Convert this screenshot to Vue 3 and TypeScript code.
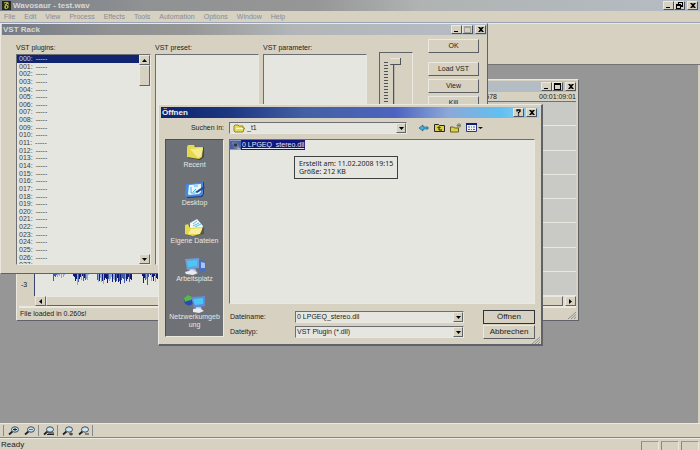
<script setup lang="ts">
import { ref } from 'vue'

const menus = ['File', 'Edit', 'View', 'Process', 'Effects', 'Tools', 'Automation', 'Options', 'Window', 'Help']
const slots = Array.from({ length: 28 }, (_, i) => String(i).padStart(3, '0') + ':')
const selectedSlot = ref(0)
const paramValue = ref(0)
const fileName = ref('0 LPGEQ_stereo.dll')
const fileType = ref('VST Plugin (*.dll)')
const folder = ref('_t1')
const rackActions = ['Load VST', 'View', 'Kill']
const places = [
  { id: 'recent', label: 'Recent' },
  { id: 'desktop', label: 'Desktop' },
  { id: 'docs', label: 'Eigene Dateien' },
  { id: 'computer', label: 'Arbeitsplatz' },
  { id: 'network', label: 'Netzwerkumgebung' },
]
const zoomTools = [
  { id: 'in', label: 'Zoom in', group: 0 },
  { id: 'out', label: 'Zoom out', group: 0 },
  { id: 'fit', label: 'Zoom to selection', group: 1 },
  { id: 'vin', label: 'Vertical zoom in', group: 2 },
  { id: 'vout', label: 'Vertical zoom out', group: 2 },
]

interface Peak { x: number; h: number; tone: string }
const tones = ['#101878', '#3c5ca8', '#8ca8d8']
function burst(from: number, to: number, heights: number[]): Peak[] {
  const out: Peak[] = []
  for (let x = from; x < to; x++) {
    const h = heights[(x - from) % heights.length] ?? 0
    if (h > 0) out.push({ x, h, tone: tones[(x * 5 + h) % 3] ?? '#101878' })
  }
  return out
}
const peaks: Peak[] = [
  ...burst(18, 30, [7, 2, 3, 1, 3, 1, 2, 0, 4, 0, 3, 1]),
  ...burst(38, 54, [2, 3, 7, 5, 11, 8, 5, 3, 6, 2, 7, 4, 6, 5, 6, 1]),
  ...burst(62, 97, [6, 8, 7, 4, 8, 7, 10, 6, 4, 5, 9, 5, 7, 5, 3, 8, 5]),
  ...burst(107, 123, [2, 9, 4, 6, 5, 11, 3, 0, 1, 7, 3, 7, 2, 8, 4, 5]),
]
</script>

<template>
  <div class="app">
    <header class="titlebar main-title">
      <svg class="app-icon" viewBox="0 0 9 9" aria-hidden="true">
        <rect width="9" height="9" fill="#24281c" />
        <path d="M2 1h4l1 2-1 1 1 2-2 2H3L2 6l1-2z" fill="#a8a848" />
        <path d="M3 2h1v1H3zM5 3h1v1H5zM4 5h1v2H4z" fill="#24281c" />
      </svg>
      <h1 class="caption">Wavosaur - test.wav</h1>
      <div class="win-buttons">
        <button class="wb" aria-label="Minimize"><svg viewBox="0 0 9 7"><path d="M2 5h4v1H2z" /></svg></button>
        <button class="wb" aria-label="Restore"><svg viewBox="0 0 9 7"><path d="M3 0h5v5H6v2H1V2h2zM4 2h2v1h1V1H4zM2 4v2h3V4z" fill-rule="evenodd" /></svg></button>
        <button class="wb apart" aria-label="Close"><svg viewBox="0 0 9 7"><path d="M2 1h2l1 1 1-1h2L6 3.500l2 2.500H6L5 5 4 6H2l2-2.500z" /></svg></button>
      </div>
    </header>
    <nav class="menubar">
      <button v-for="m in menus" :key="m" class="menu">{{ m }}</button>
    </nav>
    <div class="top-toolbar"></div>
    <main class="mdi"></main>
    <div class="zoom-toolbar">
      <div v-for="g in 3" :key="g" class="tool-group">
        <button v-for="t in zoomTools.filter(z => z.group === g - 1)" :key="t.id" class="tool" :aria-label="t.label">
          <svg viewBox="0 0 12 10" aria-hidden="true">
            <path d="M1 8.500L4.500 5.500" stroke="#202028" stroke-width="1.800" />
            <ellipse cx="7" cy="3.500" rx="3.500" ry="2.700" fill="#c8e4f0" stroke="#404858" />
            <path v-if="t.id === 'in'" d="M5 3.500h4M7 2v3" stroke="#202028" />
            <path v-if="t.id === 'out'" d="M5 3.500h4" stroke="#606878" />
            <path v-if="t.id === 'fit'" d="M4 8.500h7M5 7h6" stroke="#202028" />
            <path v-if="t.id === 'vin'" d="M7 8h4M9 6.500v3" stroke="#202028" />
            <path v-if="t.id === 'vout'" d="M7 8h4" stroke="#303038" />
          </svg>
        </button>
      </div>
    </div>
    <footer class="statusbar">
      <span class="status-text">Ready</span>
      <span class="status-cell"></span><span class="status-cell"></span><span class="status-cell"></span>
    </footer>

    <section class="window doc" aria-label="test.wav">
      <div class="titlebar doc-title">
        <div class="win-buttons">
          <button class="wb" aria-label="Minimize"><svg viewBox="0 0 9 7"><path d="M2 5h4v1H2z" /></svg></button>
          <button class="wb" aria-label="Maximize"><svg viewBox="0 0 9 7"><path d="M1 0h7v7H1zM2 2v4h5V2z" fill-rule="evenodd" /></svg></button>
          <button class="wb apart" aria-label="Close"><svg viewBox="0 0 9 7"><path d="M2 1h2l1 1 1-1h2L6 3.500l2 2.500H6L5 5 4 6H2l2-2.500z" /></svg></button>
        </div>
      </div>
      <div class="ruler"><span>578</span><span>00:01:09:01</span></div>
      <div class="doc-body">
        <div class="db-scale"><span>-3</span></div>
        <div class="wave">
          <svg class="wave-svg" viewBox="0 0 140 22" aria-hidden="true">
            <rect width="140" height="22" fill="#e6e6e1" />
            <rect v-for="p in peaks" :key="p.x" :x="p.x" y="0" width="1" :height="p.h" :fill="p.tone" />
          </svg>
          <div class="grid-lines"><i v-for="n in 8" :key="n"></i></div>
        </div>
      </div>
      <div class="hscroll">
        <button class="sb" aria-label="Scroll left"><svg viewBox="0 0 9 7"><path d="M6 1v5L3 3.500z" /></svg></button>
        <div class="hthumb"></div>
        <button class="sb" aria-label="Scroll right"><svg viewBox="0 0 9 7"><path d="M3 1v5l3-2.500z" /></svg></button>
      </div>
      <div class="doc-status">
        <span>File loaded in 0.260s!</span>
        <svg class="grip" viewBox="0 0 9 8"><path d="M1 8L9 1M4 8l5-4.500M7 8l2-2" stroke="#8c8c8c" /></svg>
      </div>
    </section>

    <section class="window rack" aria-label="VST Rack">
      <div class="titlebar rack-title">
        <h2 class="caption">VST Rack</h2>
        <div class="win-buttons">
          <button class="wb" aria-label="Minimize"><svg viewBox="0 0 9 7"><path d="M2 5h4v1H2z" /></svg></button>
          <button class="wb" aria-label="Maximize" disabled><svg viewBox="0 0 9 7"><path d="M1 0h7v7H1zM2 2v4h5V2z" fill="#a4a49c" fill-rule="evenodd" /></svg></button>
          <button class="wb apart" aria-label="Close"><svg viewBox="0 0 9 7"><path d="M2 1h2l1 1 1-1h2L6 3.500l2 2.500H6L5 5 4 6H2l2-2.500z" /></svg></button>
        </div>
      </div>
      <div class="rack-body">
        <div class="col plugins">
          <span id="lbl-plugins" class="col-label">VST plugins:</span>
          <div class="listbox">
            <ul class="slots" role="listbox" aria-labelledby="lbl-plugins">
              <li v-for="(s, i) in slots" :key="s" role="option" :aria-selected="i === selectedSlot"
                :class="{ on: i === selectedSlot }" @click="selectedSlot = i"><span>{{ s }}</span><span>-----</span></li>
            </ul>
            <div class="vscroll">
              <button class="sb" aria-label="Scroll up"><svg viewBox="0 0 9 7"><path d="M2 5h5L4.500 2z" /></svg></button>
              <div class="vthumb"></div>
              <button class="sb bottom" aria-label="Scroll down"><svg viewBox="0 0 9 7"><path d="M2 2h5L4.500 5z" /></svg></button>
            </div>
          </div>
        </div>
        <div class="col">
          <span class="col-label">VST preset:</span>
          <div class="listbox"></div>
        </div>
        <div class="col">
          <span class="col-label">VST parameter:</span>
          <div class="listbox"></div>
        </div>
        <div class="fader">
          <div class="ticks"></div>
          <input v-model="paramValue" type="range" min="0" max="100" aria-label="Parameter value" />
        </div>
        <div class="rack-actions">
          <button class="btn ok">OK</button>
          <button v-for="a in rackActions" :key="a" class="btn">{{ a }}</button>
        </div>
      </div>
    </section>

    <section class="window dialog" role="dialog" aria-label="Öffnen">
      <div class="titlebar dialog-title">
        <h2 class="caption">Öffnen</h2>
        <div class="win-buttons">
          <button class="wb" aria-label="Help"><svg viewBox="0 0 9 7"><path d="M3 2.500V1h3v1.500L4.500 3.500v1.200M4.500 5.500v1.200" fill="none" stroke="#000" stroke-width="1.300" /></svg></button>
          <button class="wb apart" aria-label="Close"><svg viewBox="0 0 9 7"><path d="M2 1h2l1 1 1-1h2L6 3.500l2 2.500H6L5 5 4 6H2l2-2.500z" /></svg></button>
        </div>
      </div>
      <div class="look-in">
        <label for="folder">Suchen in:</label>
        <div class="combo with-icon">
          <select id="folder" v-model="folder"><option>_t1</option></select>
          <svg class="combo-icon" viewBox="0 0 12 9" aria-hidden="true">
            <path d="M1 7V2l1-1h3l1 1h4v2h1.500L10 8H2z" fill="#e8dc50" stroke="#8c8428" />
            <path d="M3 4.500h7" stroke="#fcfcc0" />
          </svg>
          <span class="drop"><svg viewBox="0 0 9 7"><path d="M2 2h5L4.500 5z" /></svg></span>
        </div>
        <div class="nav-tools">
          <button class="nav" aria-label="Back"><svg viewBox="0 0 11 10"><path d="M1 5l4-3v2h5v2H5v2z" fill="#40b8e8" stroke="#285078" stroke-width=".7" /></svg></button>
          <button class="nav" aria-label="Up one level"><svg viewBox="0 0 11 10"><path d="M.5 8.500v-7h4l1 1h5v6z" fill="#dcd048" stroke="#28281c" /><path d="M5 4v3h3M3.500 5L5 3.500 6.500 5" fill="none" stroke="#181818" /></svg></button>
          <button class="nav" aria-label="New folder"><svg viewBox="0 0 11 10"><path d="M.5 9V4h3l1 1h4v4z" fill="#dcd048" stroke="#68601c" /><path d="M9 0v5M6.500 2.500h4.500M7 1l4 3M11 1L7 4" stroke="#6c6c48" stroke-width=".7" /></svg></button>
          <button class="nav wide" aria-label="View menu"><svg viewBox="0 0 17 10"><path d="M.5.5h10v8H.5z" fill="#f0f0f0" stroke="#283880" /><path d="M0 1h11" stroke="#102070" stroke-width="2" /><path d="M2 4h2M5 4h1M7 4h2M2 6.500h2M5 6.500h1M7 6.500h2" stroke="#4868c0" /><path d="M12 4h5l-2.500 2z" fill="#101010" /></svg></button>
        </div>
      </div>
      <div class="dialog-body">
        <div class="places">
          <button v-for="p in places" :key="p.id" class="place">
            <svg viewBox="0 0 24 20" aria-hidden="true">
              <g v-if="p.id === 'recent'">
                <path d="M5 17V6l2-1h5l2 1h7v10l-4 3z" fill="#484838" />
                <path d="M4 16V6l1-2h6l1 2h8l-1 10-3 2z" fill="#e4d84c" />
                <path d="M7 8l13-1-2 8-3 2z" fill="#f4eb90" />
              </g>
              <g v-if="p.id === 'desktop'">
                <path d="M4 19l1-14 16-2v12l-2 3-13 1z" fill="#203c78" />
                <path d="M2 17L3 5l17-2v12l-2 2-13 1z" fill="#4888e0" />
                <path d="M5 15l1-9 12-1v8l-2 2-10 1z" fill="#e8f4f8" />
                <path d="M8 8v6h4M11 7h4M10 13l3-3" stroke="#38b8e8" fill="none" />
                <path d="M12 13l9-6 1 2-8 5z" fill="#284c90" />
              </g>
              <g v-if="p.id === 'docs'">
                <path d="M4 18v-8l3-2 7-4 7 7v6l-9 2z" fill="#585838" />
                <path d="M7 12V6l7-4 6 7-2 6z" fill="#f0f8f8" />
                <path d="M10 7l4-3M10 9l6-3M12 10l6-3" stroke="#50c0e8" />
                <path d="M2 17V8l3-1 2 4 12-1-2 7-7 2z" fill="#e4d84c" />
                <path d="M5 17l3-5 11-1-2 6z" fill="#f8eea0" />
              </g>
              <g v-if="p.id === 'computer'" transform="translate(0 2)">
                <path d="M15 3l8 1v10l-6 2z" fill="#4870c0" />
                <path d="M18 5l4 1v5h-4z" fill="#a8c4ec" />
                <path d="M2 2l14-1v10L4 13z" fill="#7898d8" />
                <path d="M4 4l10-1v6L5 10z" fill="#48c8f4" />
                <path d="M7 12h5l2 3-3 2H5z" fill="#b0c4e8" />
                <path d="M2 15l7-2 6 3-5 2-7-1z" fill="#e8ecf0" />
              </g>
              <g v-if="p.id === 'network'" transform="translate(0 1)">
                <circle cx="6" cy="6.500" r="5" fill="#284ca8" />
                <path d="M1 4l4-3 5 2-2 3-4 1-2 1z" fill="#58b848" />
                <path d="M8 3l14-1v10l-11 2z" fill="#6888d8" />
                <path d="M10 5l10-1v6l-8 1z" fill="#48c8f4" />
                <path d="M13 13h5l1 3h-6z" fill="#b0c4e8" />
                <path d="M10 15l6-1 5 3-5 2-6-1z" fill="#e8ecf0" />
              </g>
            </svg>
            <span>{{ p.label }}</span>
          </button>
        </div>
        <div class="files-and-fields">
          <div class="files">
            <button class="file">
              <svg viewBox="0 0 12 10" aria-hidden="true"><rect width="12" height="10" fill="#4860a8" /><path d="M2 2h5l3 4v3H5z" fill="#788098" /><circle cx="6" cy="5" r="2" fill="#303848" /><path d="M8 8h3v2H8z" fill="#a0b0d0" /></svg>
              <span>{{ fileName }}</span>
            </button>
            <div class="tooltip" role="tooltip">Erstellt am: 11.02.2008 19:15<br />Größe: 212 KB</div>
          </div>
          <form class="fields" @submit.prevent>
            <label for="fname">Dateiname:</label>
            <div class="combo">
              <input id="fname" v-model="fileName" type="text" />
              <span class="drop"><svg viewBox="0 0 9 7"><path d="M2 2h5L4.500 5z" /></svg></span>
            </div>
            <button class="btn default">Öffnen</button>
            <label for="ftype">Dateityp:</label>
            <div class="combo">
              <select id="ftype" v-model="fileType"><option>VST Plugin (*.dll)</option></select>
              <span class="drop"><svg viewBox="0 0 9 7"><path d="M2 2h5L4.500 5z" /></svg></span>
            </div>
            <button type="button" class="btn">Abbrechen</button>
          </form>
        </div>
      </div>
      <svg class="grip corner" viewBox="0 0 9 8"><path d="M1 8L9 1M4 8l5-4.500M7 8l2-2" stroke="#8c8c8c" /></svg>
    </section>
  </div>
</template>

<style>
body {
  background: #969696;
  overflow: hidden;
}
</style>

<style scoped>
.app {
  --face: #d6d1c0;
  --light: #ebe9df;
  --paper: #e6e6e1;
  position: relative;
  display: flex;
  flex-direction: column;
  height: 100vh;
  overflow: hidden;
  background: #969696;
  color: #1c1c1c;
  font: 7px/8px "Liberation Sans", Arial, sans-serif;
}
.app *, .app *::before { box-sizing: border-box; }
button, input, select {
  margin: 0;
  padding: 0;
  border: 0;
  border-radius: 0;
  background: none;
  color: inherit;
  font: inherit;
  outline: 0;
}
svg { display: block; }
ul { margin: 0; padding: 0; list-style: none; }

.titlebar {
  display: flex;
  align-items: center;
  flex: none;
  height: 11px;
  color: #d8d8d0;
}
.caption {
  flex: 1;
  margin: 0;
  font: bold 8px/10px "Liberation Sans", Arial, sans-serif;
}
.main-title {
  padding: 0 2px;
  gap: 2px;
  background: linear-gradient(90deg, #757b86, #8f9192 20%, #969696 45%, #b0b3b2 60%, #b5bcc4);
}
.app-icon { width: 9px; height: 9px; }
.win-buttons { display: flex; flex: none; }
.wb {
  display: grid;
  place-items: center;
  width: 11px;
  height: 9px;
  background: var(--face);
  border: 1px solid;
  border-color: var(--light) #50525a #50525a var(--light);
}
.wb svg, .sb svg, .drop svg { width: 9px; height: 7px; }
.apart { margin-left: 2px; }

.menubar {
  display: flex;
  flex: none;
  gap: 9px;
  height: 12px;
  padding: 0 4px;
  background: var(--face);
  color: #868b98;
  border-bottom: 1px solid #9aa4b4;
}
.top-toolbar {
  flex: none;
  height: 42px;
  background: var(--face);
  border-top: 1px solid var(--light);
  border-bottom: 1px solid #747474;
}
.mdi {
  flex: 1;
  border-right: 2px solid var(--face);
}
.zoom-toolbar {
  display: flex;
  flex: none;
  height: 15px;
  padding: 1px 3px;
  background: var(--face);
  border-top: 1px solid var(--light);
  border-bottom: 1px solid #84868c;
}
.tool-group {
  display: flex;
  gap: 4px;
  padding: 1px 2px 1px 4px;
  border-left: 1px solid #84888e;
}
.tool-group:last-child { border-right: 1px solid #84888e; }
.tool svg { width: 12px; height: 10px; }
.statusbar {
  display: flex;
  flex: none;
  gap: 2px;
  height: 12px;
  padding: 2px 1px 0;
  background: var(--face);
  border-top: 1px solid var(--light);
}
.status-text { flex: 1; font-size: 8px; }
.status-cell {
  width: 18px;
  height: 9px;
  border-top: 1px solid #8b98b0;
  border-left: 1px solid #84868c;
  border-right: 1px solid var(--light);
}

.window {
  position: absolute;
  display: flex;
  flex-direction: column;
  background: var(--face);
  border: 1px solid;
  border-color: var(--light) #60626a #60626a var(--light);
}
.doc {
  left: 16px;
  top: 79px;
  width: 563px;
  height: 242px;
  padding: 1px 2px;
}
.doc-title {
  justify-content: flex-end;
  background: linear-gradient(90deg, #7c8086, #b4bcc4 80%);
}
.ruler {
  display: flex;
  justify-content: flex-end;
  flex: none;
  gap: 42px;
  height: 10px;
  padding-top: 1px;
  overflow: hidden;
  white-space: nowrap;
  border-bottom: 1px solid #707070;
}
.doc-body {
  display: flex;
  flex: 1;
}
.db-scale {
  display: flex;
  align-items: flex-end;
  width: 16px;
  padding: 0 2px 7px;
  border-right: 1px solid #384470;
}
.wave {
  display: flex;
  align-items: flex-end;
  flex: 1;
  background: #c9cac6;
}
.wave-svg { width: 140px; height: 22px; }
.grid-lines {
  flex: 1;
  align-self: stretch;
  display: grid;
}
.grid-lines i { border-bottom: 1px solid var(--light); }
.hscroll {
  display: flex;
  flex: none;
  height: 10px;
  margin-left: 16px;
  background: #dfdcd0;
}
.hthumb {
  flex: 1;
  margin-right: 2px;
  background: var(--face);
  border: 1px solid;
  border-color: var(--light) #60626a #60626a var(--light);
}
.doc-status {
  display: flex;
  align-items: center;
  justify-content: space-between;
  flex: none;
  height: 13px;
  padding-left: 1px;
  border-top: 2px solid var(--light);
}
.grip { width: 9px; height: 8px; align-self: flex-end; }

.sb {
  display: grid;
  place-items: center;
  flex: none;
  width: 11px;
  height: 10px;
  background: var(--face);
  border: 1px solid;
  border-color: var(--light) #60626a #60626a var(--light);
}
.btn {
  height: 14px;
  background: var(--face);
  border: 1px solid;
  border-color: var(--light) #5c5e66 #5c5e66 var(--light);
  text-align: center;
}

.rack {
  left: 0;
  top: 23px;
  width: 488px;
  height: 251px;
}
.rack-title {
  margin-left: 1px;
  padding: 0 1px;
  background: linear-gradient(90deg, #757b86, #8f9192 22%, #969696 38%, #b2b6b8 60%, #b5bcc4);
}
.rack-body {
  display: flex;
  flex: 1;
  gap: 4px;
  min-height: 0;
  padding: 4px 8px 8px 15px;
}
.col {
  display: flex;
  flex-direction: column;
  width: 104px;
  padding-top: 5px;
}
.plugins { width: 135px; }
.col-label { height: 10px; }
.listbox {
  display: flex;
  flex: 1;
  min-height: 0;
  overflow: hidden;
  background: var(--paper);
  border: 1px solid;
  border-color: #6c6e74 var(--light) var(--light) #6c6e74;
}
.slots {
  flex: 1;
  display: grid;
  grid-auto-rows: 1fr;
  height: 214px;
}
.slots li {
  display: flex;
  gap: 3px;
  padding-left: 2px;
  min-height: 0;
  color: #3c3c40;
}
.slots .on { background: #102470; color: #d0d8ec; }
.vscroll {
  display: flex;
  flex-direction: column;
  width: 11px;
}
.vthumb {
  height: 21px;
  background: var(--face);
  border: 1px solid;
  border-color: var(--light) #60626a #60626a var(--light);
}
.bottom { margin-top: auto; }
.fader {
  display: flex;
  width: 34px;
  margin: 13px 0 0 8px;
  padding: 5px 4px 0;
  border: 1px solid;
  border-color: #60626a var(--light) var(--light) #60626a;
}
.ticks {
  width: 4px;
  margin-top: 4px;
  background: repeating-linear-gradient(#50525a 0 1px, transparent 1px 3px);
}
.fader input {
  appearance: none;
  writing-mode: vertical-lr;
  width: 13px;
  height: 100%;
  background: linear-gradient(90deg, transparent 5px, #50525a 5px 6px, #b4b4ac 6px 7px, transparent 7px);
}
.fader input::-webkit-slider-thumb {
  appearance: none;
  width: 13px;
  height: 7px;
  background: linear-gradient(var(--light) 1px, var(--face) 1px 6px, #50525a 6px);
  border-right: 1px solid #50525a;
  clip-path: polygon(0 50%, 20% 0, 100% 0, 100% 100%, 20% 100%);
}
.rack-actions {
  display: flex;
  flex-direction: column;
  gap: 3px;
  width: 51px;
  margin-left: auto;
}
.ok { margin-bottom: 6px; }

.dialog {
  left: 158px;
  top: 104px;
  width: 385px;
  height: 242px;
  padding: 2px;
  border-width: 1px 2px 2px 1px;
}
.dialog-title {
  padding: 0 2px 0 1px;
  background: linear-gradient(90deg, #0c246c, #1c3680 18%, #4460a4 38%, #4c64c0 62%, #8ca8d8 76%, #60c0f0 90%, #a0d0f0);
}
.dialog-title .caption { color: #f0f0f0; }
.look-in {
  display: flex;
  align-items: center;
  flex: none;
  height: 20px;
  padding: 0 3px;
}
.look-in label {
  width: 60px;
  text-align: right;
}
.combo {
  position: relative;
  display: flex;
  height: 12px;
  background: var(--paper);
  border: 1px solid;
  border-color: #6c6e74 var(--light) var(--light) #6c6e74;
}
.look-in .combo { width: 178px; margin-left: 5px; }
.combo select, .combo input {
  appearance: none;
  width: 100%;
  padding: 0 12px 0 1px;
  line-height: 10px;
}
.combo.with-icon select { padding-left: 17px; }
.combo-icon {
  position: absolute;
  left: 3px;
  top: 1px;
  width: 12px;
  height: 9px;
}
.drop {
  position: absolute;
  right: 0;
  top: 0;
  display: grid;
  place-items: center;
  width: 10px;
  height: 10px;
  background: var(--face);
  border: 1px solid;
  border-color: var(--light) #60626a #60626a var(--light);
  pointer-events: none;
}
.nav-tools { display: flex; gap: 5px; margin-left: 11px; }
.nav svg { width: 11px; height: 10px; }
.nav.wide svg { width: 17px; }
.dialog-body {
  display: flex;
  flex: 1;
  gap: 5px;
  min-height: 0;
  padding: 1px 4px 5px;
}
.places {
  display: flex;
  flex-direction: column;
  width: 59px;
  padding-top: 1px;
  background: #6e7276;
  border: 1px solid;
  border-color: #4c4e54 var(--light) var(--light) #4c4e54;
}
.place {
  display: flex;
  flex-direction: column;
  align-items: center;
  height: 38px;
  color: #e6e6e1;
}
.place svg { width: 24px; height: 20px; }
.place span {
  width: 54px;
  text-align: center;
  overflow-wrap: anywhere;
}
.files-and-fields {
  display: flex;
  flex: 1;
  flex-direction: column;
  min-width: 0;
}
.files {
  position: relative;
  flex: none;
  height: 165px;
  background: var(--paper);
  border: 1px solid;
  border-color: #6c6e74 var(--light) var(--light) #6c6e74;
}
.file {
  display: flex;
  align-items: center;
}
.file svg { width: 11px; height: 10px; }
.file span {
  padding: 0 1px;
  background: #101880;
  color: #e0e4f4;
  line-height: 10px;
  text-decoration: underline;
}
.tooltip {
  position: absolute;
  left: 64px;
  top: 16px;
  padding: 3px 4px 2px;
  background: var(--paper);
  border: 1px solid #404040;
  font: 7px/8px "Noto Sans", sans-serif;
  white-space: nowrap;
}
.fields {
  display: grid;
  grid-template-columns: 64px 169px 1fr;
  column-gap: 1px;
  row-gap: 1px;
  align-items: center;
  padding: 6px 0 0 1px;
}
.fields .btn { justify-self: end; width: 52px; font-size: 8px; }
.fields .default { border-color: #30323a; }
.corner {
  position: absolute;
  right: 1px;
  bottom: 0;
}
</style>
